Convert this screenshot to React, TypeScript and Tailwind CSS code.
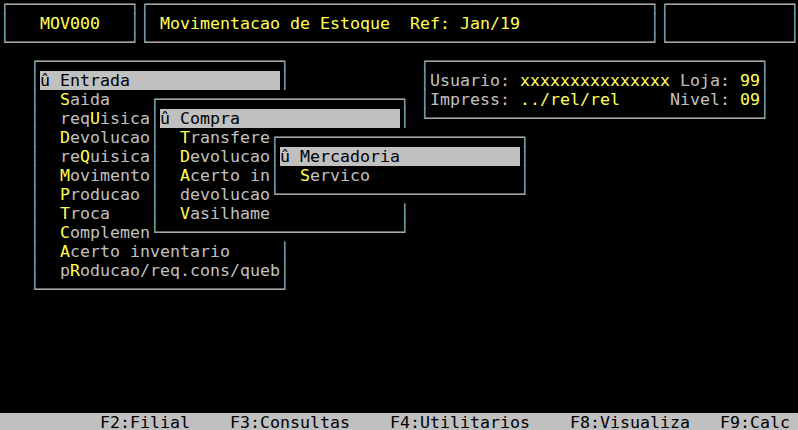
type Cell = { c: string; f: string; b: string };

const COLS = 80;
const ROWS = 23;

const FG: Record<string, string> = {
  g: 'text-[#c0c0c0]',
  y: 'text-[#ffff55]',
  k: 'text-black',
  b: 'text-[#a8a8a8]',
};

const BG: Record<string, string> = {
  n: '',
  h: 'bg-[#c0c0c0]',
};

function buildScreen() {
  const grid: Cell[][] = Array.from({ length: ROWS }, () =>
    Array.from({ length: COLS }, () => ({ c: ' ', f: 'g', b: 'n' }))
  );

  const put = (r: number, c: number, text: string, f = 'g', b = 'n') => {
    [...text].forEach((ch, i) => {
      const col = c + i;
      if (r < 0 || r >= ROWS || col < 0 || col >= COLS) return;
      grid[r][col] = { c: ch, f, b };
    });
  };

  // draws a window: clears the inside and puts a line border round it
  const box = (r0: number, c0: number, r1: number, c1: number) => {
    for (let r = r0; r <= r1; r++) {
      for (let c = c0; c <= c1; c++) {
        let ch = ' ';
        if (r === r0 || r === r1) ch = '─';
        if (c === c0 || c === c1) ch = '│';
        if (r === r0 && c === c0) ch = '┌';
        if (r === r0 && c === c1) ch = '┐';
        if (r === r1 && c === c0) ch = '└';
        if (r === r1 && c === c1) ch = '┘';
        grid[r][c] = { c: ch, f: ch === ' ' ? 'g' : 'b', b: 'n' };
      }
    }
  };

  // menu entry: two-space indent, hotkey letter in yellow, selected row inverted
  const menu = (
    top: number,
    col: number,
    width: number,
    items: { label: string; hot: number }[],
    selected: number
  ) => {
    items.forEach((it, i) => {
      const r = top + i;
      if (i === selected) {
        put(r, col, ('û ' + it.label).padEnd(width, ' ').slice(0, width), 'k', 'h');
        return;
      }
      const text = ('  ' + it.label).slice(0, width);
      put(r, col, text);
      if (it.hot >= 0 && it.hot + 2 < width) put(r, col + 2 + it.hot, it.label[it.hot], 'y');
    });
  };

  // header boxes
  box(0, 0, 2, 13);
  box(0, 14, 2, 65);
  box(0, 66, 2, 79);
  put(1, 4, 'MOV000', 'y');
  put(1, 16, 'Movimentacao de Estoque  Ref: Jan/19', 'y');

  // user info
  box(3, 42, 6, 76);
  put(4, 43, 'Usuario: ');
  put(4, 52, 'xxxxxxxxxxxxxxx', 'y');
  put(4, 67, ' Loja: ');
  put(4, 74, '99', 'y');
  put(5, 43, 'Impress: ');
  put(5, 52, '../rel/rel', 'y');
  put(5, 62, '     Nivel: ');
  put(5, 74, '09', 'y');

  // main menu
  box(3, 3, 15, 28);
  menu(
    4,
    4,
    24,
    [
      { label: 'Entrada', hot: 0 },
      { label: 'Saida', hot: 0 },
      { label: 'reqUisicao', hot: 3 },
      { label: 'Devolucao', hot: 0 },
      { label: 'reQuisicao', hot: 2 },
      { label: 'Movimentos', hot: 0 },
      { label: 'Producao', hot: 0 },
      { label: 'Troca', hot: 0 },
      { label: 'Complemento', hot: 0 },
      { label: 'Acerto inventario', hot: 0 },
      { label: 'pRoducao/req.cons/queb', hot: 1 },
    ],
    0
  );

  // first submenu
  box(5, 15, 12, 40);
  menu(
    6,
    16,
    24,
    [
      { label: 'Compra', hot: 0 },
      { label: 'Transferencia', hot: 0 },
      { label: 'Devolucao', hot: 0 },
      { label: 'Acerto inventario', hot: 0 },
      { label: 'devolucao', hot: -1 },
      { label: 'Vasilhame', hot: 0 },
    ],
    0
  );

  // second submenu
  box(7, 27, 10, 52);
  menu(
    8,
    28,
    24,
    [
      { label: 'Mercadoria', hot: 0 },
      { label: 'Servico', hot: 0 },
    ],
    0
  );

  // function key bar
  for (let c = 0; c < COLS; c++) grid[22][c] = { c: ' ', f: 'k', b: 'h' };
  put(22, 10, 'F2:Filial', 'k', 'h');
  put(22, 23, 'F3:Consultas', 'k', 'h');
  put(22, 39, 'F4:Utilitarios', 'k', 'h');
  put(22, 57, 'F8:Visualiza', 'k', 'h');
  put(22, 72, 'F9:Calc', 'k', 'h');

  return grid;
}

export default function App() {
  const grid = buildScreen();

  return (
    <div className="w-[798px] h-[430px] overflow-hidden bg-black">
      <div className="mt-[-5px] font-['DejaVu_Sans_Mono',monospace] text-[16.61px] leading-[19px]">
        {grid.map((row, r) => (
          <div key={r} className="flex h-[19px] whitespace-pre">
            {row.map((cell, c) => (
              <span
                key={c}
                className={`inline-block w-[10px] h-[19px] shrink-0 overflow-visible ${FG[cell.f]} ${BG[cell.b]}`}
              >
                {cell.c}
              </span>
            ))}
          </div>
        ))}
      </div>
    </div>
  );
}
